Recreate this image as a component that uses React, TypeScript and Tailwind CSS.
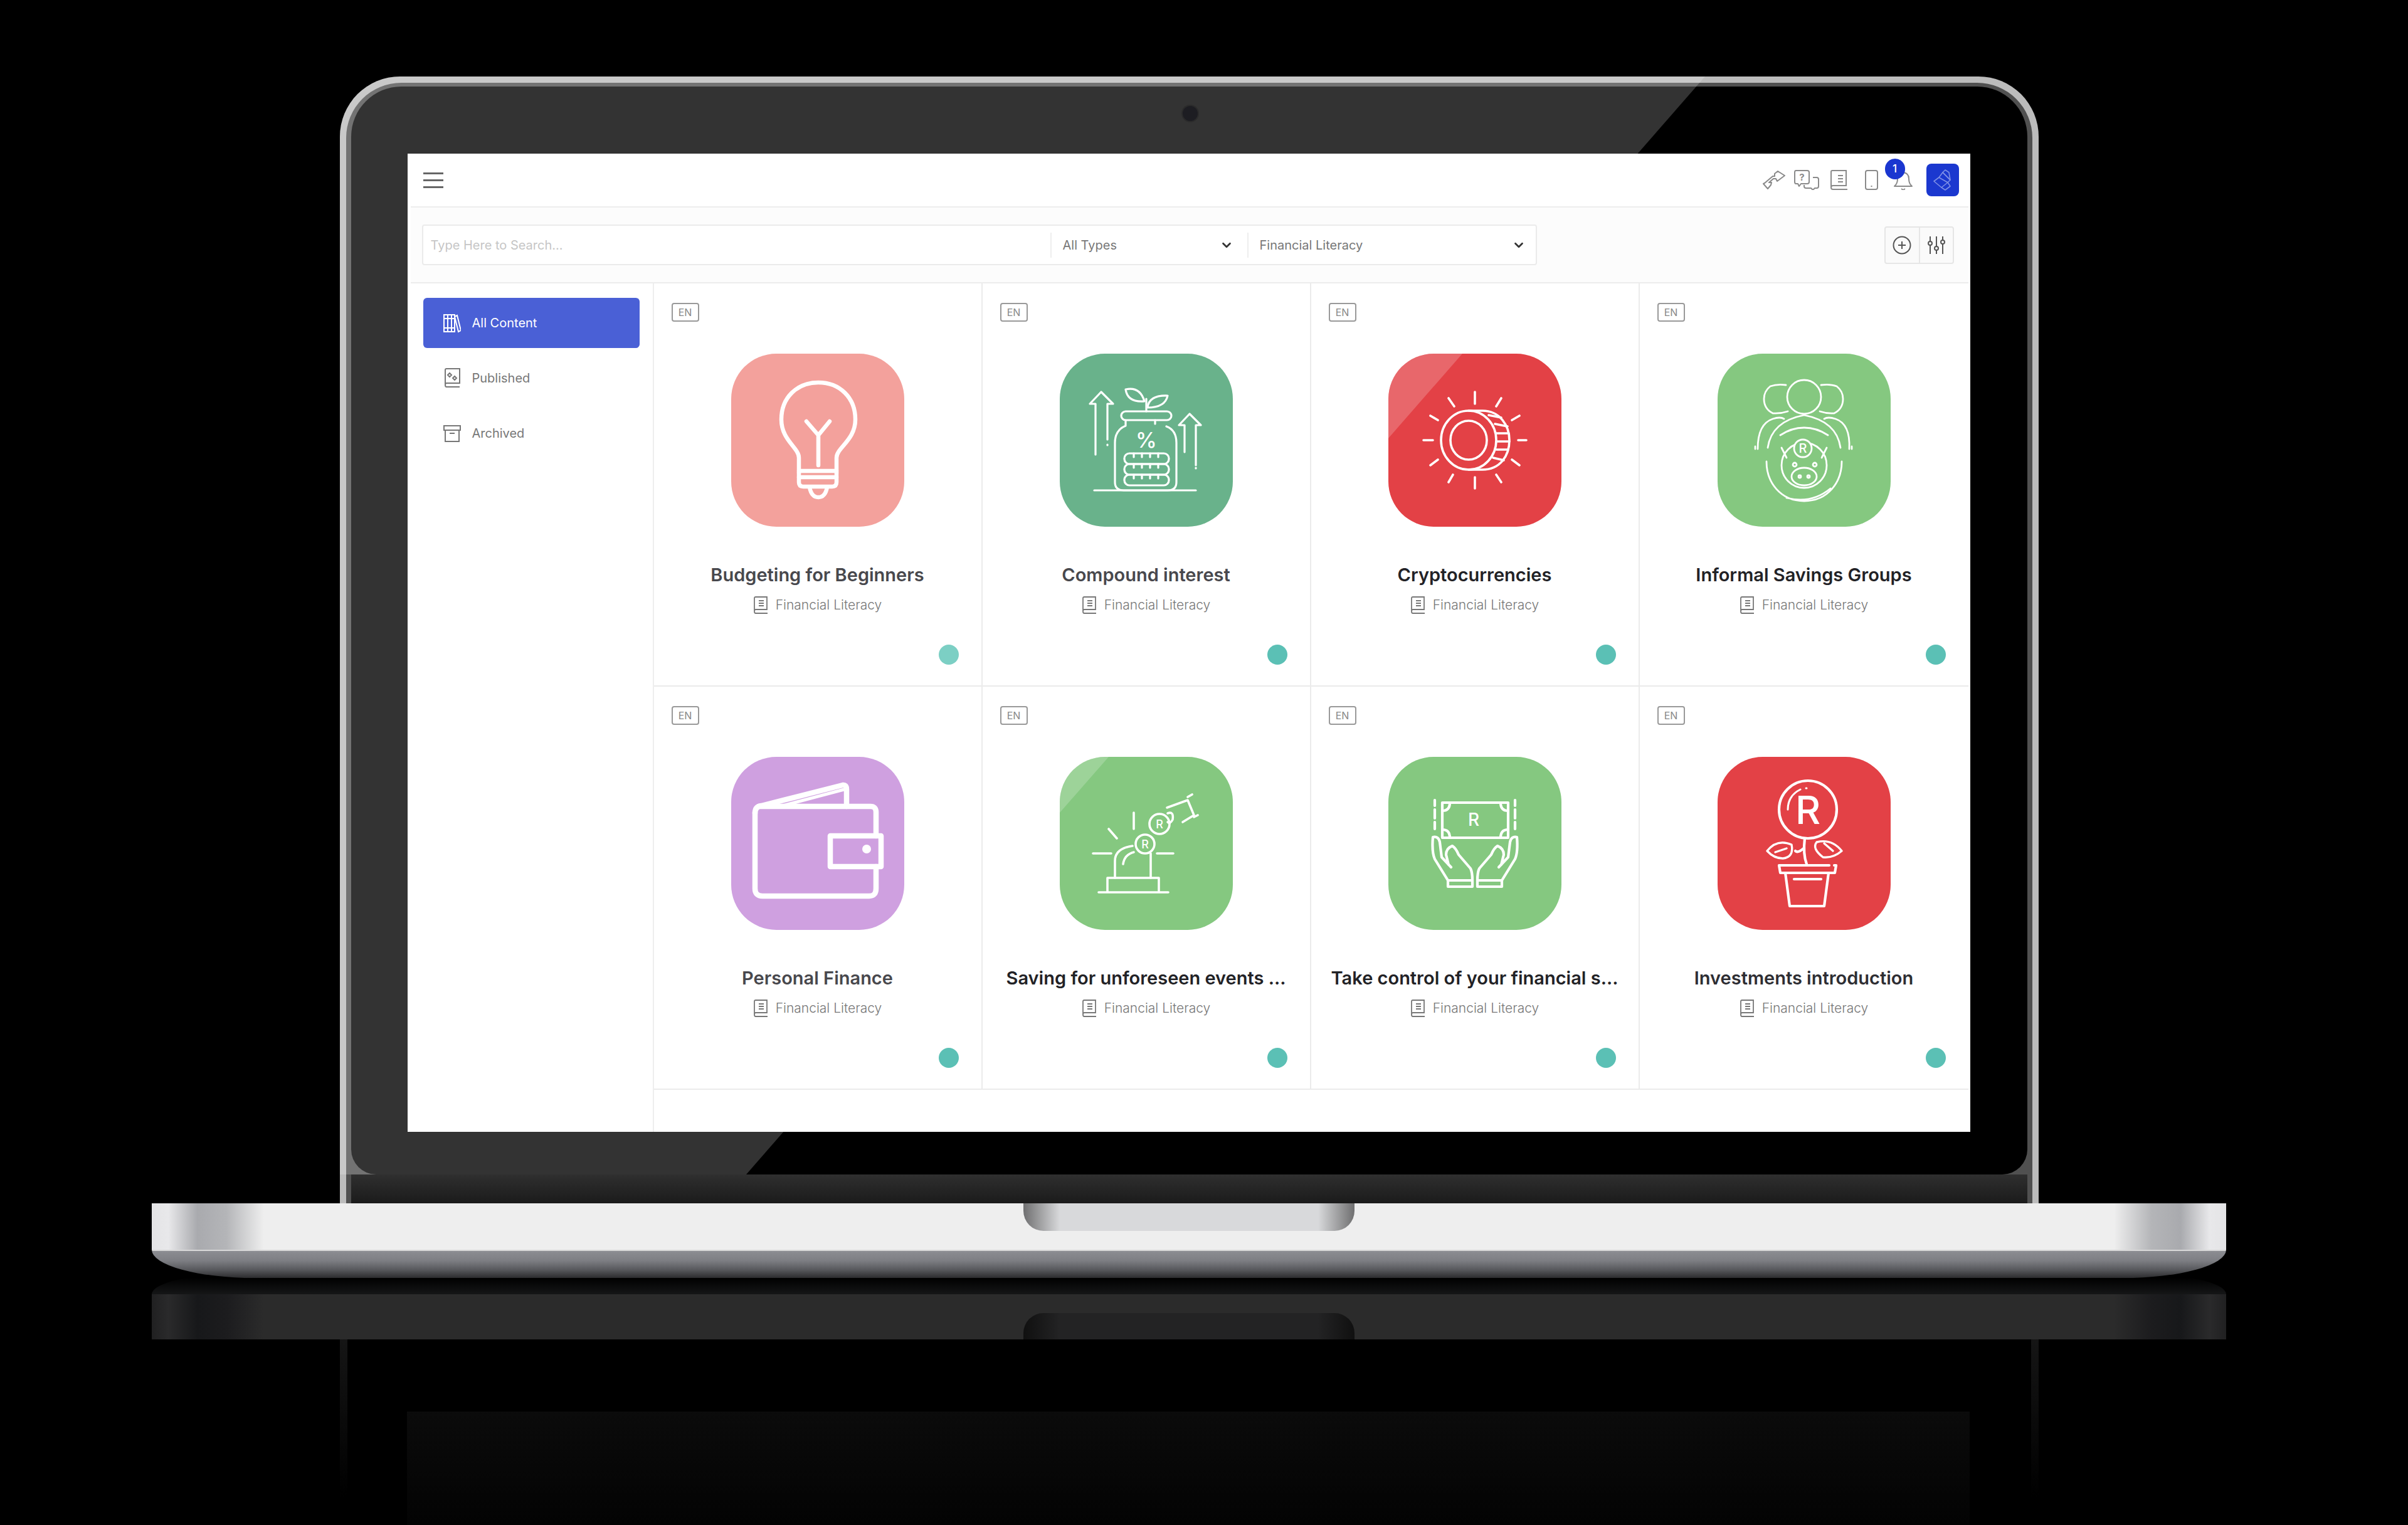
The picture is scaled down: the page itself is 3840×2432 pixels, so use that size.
import type { ReactNode } from "react";
import { ChevronDown } from "lucide-react";

const SANS = "font-['Inter','Liberation_Sans',sans-serif]";

function TileSvg({ width = 4, children }: { width?: number; children: ReactNode }) {
  return (
    <svg
      viewBox="0 0 276 276"
      className="h-full w-full"
      fill="none"
      stroke="#fff"
      strokeWidth={width}
      strokeLinecap="round"
      strokeLinejoin="round"
    >
      {children}
    </svg>
  );
}

const tileText = { fill: "#fff", stroke: "none", fontFamily: "Inter, sans-serif", fontWeight: 500 };

function BulbArt() {
  return (
    <TileSvg width={6.5}>
      <path d="M108 190V166C108 150 80 138 80 105C80 70 105 46 139 46C173 46 198 70 198 105C198 138 168 150 168 166V190" />
      <path d="M108 187H168M108 197H168" />
      <path d="M108 190V205Q108 212 115 212H161Q168 212 168 205V190" />
      <path d="M125 213Q128 229 139 229Q150 229 153 213" />
      <path d="M120 108L139 130L157 108M139 130V178" />
    </TileSvg>
  );
}

function JarArt() {
  return (
    <TileSvg width={3.2}>
      <path d="M57 161V80H48L66 61L85 80H76V137M76 145V146" />
      <path d="M199 157V114H190L207 96L225 114H217V178M217 182V183" />
      <rect x="98" y="92" width="80" height="14" rx="7" />
      <path d="M105 106V115Q88 122 88 142V205Q88 218 102 218H172Q186 218 186 205V142Q186 122 170 116M152 106V112" />
      <path d="M55 218H217" />
      <rect x="103" y="159" width="71" height="17" rx="8" />
      <rect x="103" y="176" width="71" height="17" rx="8" />
      <rect x="103" y="193" width="71" height="17" rx="8" />
      <path d="M118 159V165M131 159V165M144 159V165M157 159V165M118 176V182M131 176V182M144 176V182M157 176V182M118 193V199M131 193V199M144 193V199M157 193V199" />
      <path d="M138 92V72" />
      <path d="M135 76Q108 78 105 57Q128 52 135 76Z" />
      <path d="M140 86Q142 66 172 67Q168 86 140 86Z" />
      <text x="138" y="150" textAnchor="middle" fontSize="34" style={tileText}>%</text>
    </TileSvg>
  );
}

function CoinArt() {
  return (
    <TileSvg width={3.6}>
      <path d="M138 61V80M138 197V215M56 138H71M207 138H220M96 71L105 84M180 71L172 84M67 99L79 106M209 99L197 106M67 178L79 169M209 178L197 169M96 205L103 193M180 205L172 193" />
      <ellipse cx="128" cy="138" rx="44" ry="47" />
      <ellipse cx="128" cy="138" rx="29" ry="31" />
      <path d="M128 91H150C178 91 193 115 193 138C193 163 178 185 150 185H128" />
      <path d="M160 98L180 102M170 112L190 116M172 127L192 127M172 140L193 140M172 153L191 153M167 166L184 170" />
    </TileSvg>
  );
}

function PiggyArt() {
  return (
    <TileSvg width={2.8}>
      <ellipse cx="138" cy="69" rx="27" ry="27" />
      <path d="M109 50Q95 48 84 52Q74 60 74 72Q74 88 88 95Q100 96 112 92" />
      <path d="M165 50Q180 48 190 52Q200 60 200 72Q200 88 186 95Q175 96 163 92" />
      <path d="M64 152Q64 112 88 104Q100 100 106 104M210 152Q212 112 188 104Q176 100 170 104" />
      <path d="M80 150Q86 108 138 98Q190 108 196 150" />
      <path d="M60 152V148M214 152V148" />
      <path d="M78 172C78 205 100 235 138 235C176 235 198 205 198 172M100 130Q118 118 138 118Q158 118 176 130M110 230Q150 240 180 215" />
      <circle cx="138" cy="178" r="36" />
      <ellipse cx="138" cy="196" rx="20" ry="14" />
      <circle cx="123" cy="177" r="3" />
      <circle cx="155" cy="177" r="3" />
      <circle cx="131" cy="196" r="2" />
      <circle cx="145" cy="196" r="2" />
      <path d="M102 150L110 166M174 150L166 166" />
      <circle cx="136" cy="151" r="14" fill="#85c880" />
      <text x="136" y="158" textAnchor="middle" fontSize="20" style={tileText}>R</text>
    </TileSvg>
  );
}

function WalletArt() {
  return (
    <TileSvg width={8.5}>
      <path d="M38 90Q38 79 48 78L178 45Q184 44 184 52V79" />
      <path d="M82 78L180 52" strokeWidth={5} />
      <path d="M38 88V210Q38 222 50 222H220Q231 222 231 210V175M231 126V88Q231 79 222 79H44" />
      <rect x="158" y="126" width="81" height="49" />
      <circle cx="216" cy="147" r="7" fill="#fff" stroke="none" />
    </TileSvg>
  );
}

function AlarmArt() {
  return (
    <TileSvg width={3.6}>
      <path d="M62 216H173M76 216V193H158V216" />
      <path d="M88 193V166Q88 146 116 142M145 193V154" />
      <path d="M101 171Q103 156 118 152" />
      <circle cx="136" cy="139" r="15" />
      <circle cx="159" cy="107" r="16" />
      <text x="136" y="146" textAnchor="middle" fontSize="18" style={tileText}>R</text>
      <text x="159" y="114" textAnchor="middle" fontSize="18" style={tileText}>R</text>
      <path d="M171 81L204 69L214 93L196 104M172 90Q182 86 180 100Q176 108 172 104" />
      <path d="M204 64L211 60M214 96L220 93" />
      <path d="M118 89V115M78 115L91 130M53 154H82M155 154H181" />
    </TileSvg>
  );
}

function HandsArt() {
  return (
    <TileSvg width={4.2}>
      <rect x="86" y="73" width="105" height="56" />
      <path d="M86 86Q98 86 98 73M191 86Q179 86 179 73M86 116Q98 116 98 129M191 116Q179 116 179 129" />
      <path d="M74 69V78M74 84V98M74 104V115M202 69V78M202 84V98M202 104V115" />
      <text x="136" y="110" textAnchor="middle" fontSize="28" style={tileText}>R</text>
      <path d="M95 197L74 163Q69 152 71 128Q80 126 82 136L85 160L100 176M96 172L92 156Q92 146 102 142Q108 146 112 156L131 178Q134 184 134 197" />
      <rect x="95" y="197" width="39" height="10" />
      <path d="M181 197L202 163Q207 152 205 128Q196 126 194 136L191 160L176 176M180 172L184 156Q184 146 174 142Q168 146 164 156L145 178Q142 184 142 197" />
      <rect x="142" y="197" width="39" height="10" />
    </TileSvg>
  );
}

function PlantArt() {
  return (
    <TileSvg width={4.2}>
      <circle cx="144" cy="84" r="46" />
      <path d="M112 84Q112 62 132 52M141 50H142" strokeWidth={3} />
      <text x="144" y="107" textAnchor="middle" fontSize="62" style={tileText}>R</text>
      <path d="M139 130Q136 155 142 171M137 146Q128 154 124 150" />
      <path d="M79 150Q95 130 118 140Q122 160 104 162Q90 162 79 150ZM92 152L110 146" strokeWidth={3.4} />
      <path d="M198 150Q182 130 158 136Q150 146 168 160Q184 162 198 150ZM170 138L184 150" strokeWidth={3.4} />
      <path d="M98 173H178M186 173H189L187 185H100L98 173" />
      <path d="M108 185L115 238H170L177 185M122 195H165" />
    </TileSvg>
  );
}

const cards = [
  { title: "Budgeting for Beginners", tile: "bg-[#f3a19c]", text: "text-[#48484d]", dot: "bg-[#7ccfc4]", art: <BulbArt /> },
  { title: "Compound interest", tile: "bg-[#69b28b]", text: "text-[#48484d]", dot: "bg-[#5bc0b5]", art: <JarArt /> },
  { title: "Cryptocurrencies", tile: "bg-[#e34146]", text: "text-[#222226]", dot: "bg-[#5bc0b5]", art: <CoinArt />, glare: "0,0 118,0 0,135" },
  { title: "Informal Savings Groups", tile: "bg-[#85c880]", text: "text-[#222226]", dot: "bg-[#5bc0b5]", art: <PiggyArt /> },
  { title: "Personal Finance", tile: "bg-[#cfa0e0]", text: "text-[#48484d]", dot: "bg-[#5bc0b5]", art: <WalletArt /> },
  { title: "Saving for unforeseen events ...", tile: "bg-[#85c880]", text: "text-[#222226]", dot: "bg-[#5bc0b5]", art: <AlarmArt />, glare: "0,0 78,0 0,89" },
  { title: "Take control of your financial s...", tile: "bg-[#85c880]", text: "text-[#222226]", dot: "bg-[#5bc0b5]", art: <HandsArt /> },
  { title: "Investments introduction", tile: "bg-[#e34146]", text: "text-[#2e2e33]", dot: "bg-[#5bc0b5]", art: <PlantArt /> },
];

function BookIcon({ className }: { className: string }) {
  return (
    <svg viewBox="0 0 25 28" className={className} fill="none" stroke="currentColor" strokeWidth={1.8}>
      <path d="M2 24V3Q2 1 4 1H22V21H4Q2 21 2 24Q2 27 4 27H23" />
      <path d="M9 7H17M9 11H17M9 15H17" />
    </svg>
  );
}

function TopIcons() {
  return (
    <div className="flex items-center text-[#8a8a8a]">
      {/* swap arrows */}
      <svg viewBox="0 0 37 30" className="h-[30px] w-[37px]" fill="none" stroke="currentColor" strokeWidth={2} strokeLinejoin="round">
        <path d="M3 20L16 9H19V5L24 1L35 8L23 17L21 13H17L10 19H14L13 23L8 29L1 21Z" />
      </svg>
      {/* help chat */}
      <svg viewBox="0 0 40 32" className="ml-[13px] h-[32px] w-[40px]" fill="none" stroke="currentColor" strokeWidth={2} strokeLinejoin="round">
        <path d="M3 1H21Q24 1 24 4V19Q24 22 21 22H11L8 26L6 22H3Q1 22 1 19V4Q1 1 3 1Z" />
        <path d="M30 12H36Q39 12 39 15V26Q39 29 36 29H33L30 32L27 29H19Q16 29 16 26V24" />
        <text x="12.5" y="17" textAnchor="middle" fontSize="15" fontWeight="700" fill="currentColor" stroke="none" fontFamily="Inter, sans-serif">?</text>
      </svg>
      {/* manual */}
      <svg viewBox="0 0 28 32" className="ml-[17px] h-[32px] w-[28px]" fill="none" stroke="currentColor" strokeWidth={2}>
        <path d="M2 27V3Q2 1 4 1H26V25H5Q2 25 2 28Q2 31 5 31H28" />
        <path d="M13 9H21M13 14H21M13 19H21" />
      </svg>
      {/* phone */}
      <svg viewBox="0 0 21 32" className="ml-[28px] h-[32px] w-[21px]" fill="none" stroke="currentColor" strokeWidth={2}>
        <rect x="1" y="1" width="19" height="30" rx="3" />
        <path d="M9.5 26H11.5" />
      </svg>
      {/* bell with badge */}
      <div className="relative ml-[25px] h-[32px] w-[30px]">
        <svg viewBox="0 0 30 32" className="h-[32px] w-[30px]" fill="none" stroke="currentColor" strokeWidth={2} strokeLinejoin="round">
          <path d="M1 26Q6 22 6 14Q6 5 15 4Q24 5 24 14Q24 22 29 26Z" />
          <path d="M12 30L15 32L18 30" />
        </svg>
        <div className={`absolute top-[-18px] left-[-14px] flex h-[33px] w-[32px] items-center justify-center rounded-full bg-[#1a36d0] text-[17px] font-medium text-white ${SANS}`}>
          1
        </div>
      </div>
      {/* logo */}
      <div className="ml-[22px] h-[52px] w-[52px] rounded-[8px] bg-[#1b38cf] p-[8px]">
        <svg viewBox="0 0 36 36" className="h-full w-full" fill="none" stroke="#7f90e6" strokeWidth={1.6} strokeLinejoin="round">
          <path d="M22 2L28 6L30 18L18 6Z" />
          <path d="M18 6L30 18L26 22L12 14Z" />
          <path d="M12 14L4 20L16 30L26 22" />
          <path d="M16 30L22 34L30 28L26 22" />
        </svg>
      </div>
    </div>
  );
}

function SideItem({ label, active, children }: { label: string; active?: boolean; children: ReactNode }) {
  return (
    <div className={`flex h-[80px] w-[345px] items-center gap-[18px] rounded-[6px] pl-[32px] text-[20px] ${SANS} ${active ? "bg-[#4a60d6] text-white" : "text-[#777]"}`}>
      {children}
      <span>{label}</span>
    </div>
  );
}

function AppScreen() {
  return (
    <div className="relative z-10 flex h-[1560px] w-[2492px] flex-col bg-white">
      {/* Top bar */}
      <div className="mr-[3px] ml-[5px] flex h-[86px] shrink-0 items-center justify-between border-b-2 border-[#eee] pr-[15px] pl-[20px]">
        <div className="flex h-[25px] w-[32px] flex-col justify-between">
          <div className="h-[3px] bg-[#666]" />
          <div className="h-[3px] bg-[#666]" />
          <div className="h-[3px] bg-[#666]" />
        </div>
        <TopIcons />
      </div>

      {/* Filter row */}
      <div className="mr-[3px] ml-[5px] flex h-[121px] shrink-0 items-center border-b-2 border-[#ececec] bg-[#fcfcfc] pr-[23px] pl-[18px]">
        <div className={`flex h-[65px] w-[1778px] items-center rounded-[4px] border-2 border-[#ebebeb] bg-white text-[20px] text-[#777] ${SANS}`}>
          <input
            className="h-full w-[1000px] bg-transparent pl-[12px] text-[20px] outline-none placeholder:text-[#c6c6c6]"
            placeholder="Type Here to Search..."
          />
          <div className="flex h-[40px] w-[314px] items-center justify-between border-l-2 border-[#eee] pr-[22px] pl-[18px]">
            <span>All Types</span>
            <ChevronDown className="h-[22px] w-[22px] text-[#333]" strokeWidth={3} />
          </div>
          <div className="flex h-[40px] flex-1 items-center justify-between border-l-2 border-[#eee] pr-[16px] pl-[18px]">
            <span>Financial Literacy</span>
            <ChevronDown className="h-[22px] w-[22px] text-[#333]" strokeWidth={3} />
          </div>
        </div>
        <div className="ml-auto flex h-[60px] w-[111px] rounded-[4px] border-2 border-[#e6e6e6] bg-[#fafafa] text-[#555]">
          <div className="flex w-[55px] items-center justify-center border-r-2 border-[#e6e6e6]">
            <svg viewBox="0 0 30 30" className="h-[30px] w-[30px]" fill="none" stroke="currentColor" strokeWidth={2}>
              <circle cx="15" cy="15" r="13.5" />
              <path d="M15 9V21M9 15H21" />
            </svg>
          </div>
          <div className="flex flex-1 items-center justify-center">
            <svg viewBox="0 0 28 30" className="h-[30px] w-[28px]" fill="none" stroke="currentColor" strokeWidth={2}>
              <path d="M4 1V9M4 15V29M14 1V17M14 23V29M24 1V7M24 13V29" />
              <circle cx="4" cy="12" r="3" />
              <circle cx="14" cy="20" r="3" />
              <circle cx="24" cy="10" r="3" />
            </svg>
          </div>
        </div>
      </div>

      {/* Body */}
      <div className="flex flex-1">
        <div className="flex w-[393px] shrink-0 flex-col gap-[8px] border-r-2 border-[#eee] pt-[23px] pl-[25px]">
          <SideItem label="All Content" active>
            <svg viewBox="0 0 28 32" className="h-[32px] w-[28px]" fill="none" stroke="currentColor" strokeWidth={2}>
              <path d="M1 3H7V30H1ZM7 3H13V30H7ZM13 3H18V30H13ZM1 9H18M1 24H18M18 6L22 4L28 28L24 30Z" />
            </svg>
          </SideItem>
          <SideItem label="Published">
            <svg viewBox="0 0 28 32" className="h-[32px] w-[28px]" fill="none" stroke="currentColor" strokeWidth={2}>
              <path d="M3 26V3Q3 1 5 1H26V24H5Q3 24 3 27Q3 30 5 30H26" />
              <path d="M10 8L13 11L10 14L7 11ZM18 13L21 16L18 19L15 16Z" />
            </svg>
          </SideItem>
          <SideItem label="Archived">
            <svg viewBox="0 0 28 28" className="h-[28px] w-[28px]" fill="none" stroke="currentColor" strokeWidth={2}>
              <path d="M1 2H27V9H1ZM3 9V27H25V9M10 14H18" />
            </svg>
          </SideItem>
        </div>

        <div className="grid auto-rows-[643px] grid-cols-[repeat(4,524px)]">
          {cards.map((c) => (
            <div key={c.title} className="flex flex-col items-center border-r-2 border-b-2 border-[#ebebeb] pt-[31px] nth-[4n]:border-r-0">
              <div className={`ml-[28px] flex h-[30px] w-[44px] items-center justify-center self-start rounded-[4px] border-2 border-[#999] text-[16px] text-[#888] ${SANS}`}>
                EN
              </div>
              <div className={`relative mt-[51px] h-[276px] w-[276px] overflow-hidden rounded-[72px] ${c.tile}`}>
                {c.glare && (
                  <svg viewBox="0 0 276 276" className="absolute inset-0 h-full w-full">
                    <polygon points={c.glare} fill="#fff" fillOpacity={0.2} />
                  </svg>
                )}
                <div className="absolute inset-0">{c.art}</div>
              </div>
              <div className={`mt-[57px] h-[40px] text-[29px] leading-[40px] font-semibold whitespace-nowrap ${c.text} ${SANS}`}>
                {c.title}
              </div>
              <div className={`mt-[14px] flex h-[28px] items-center gap-[11px] text-[21px] font-light text-[#777] ${SANS}`}>
                <BookIcon className="h-[28px] w-[25px] text-[#777]" />
                <span>Financial Literacy</span>
              </div>
              <div className={`mt-auto mr-[36px] mb-[33px] h-[32px] w-[32px] self-end rounded-full ${c.dot}`} />
            </div>
          ))}
        </div>
      </div>
    </div>
  );
}

export default function App() {
  return (
    <div className="h-[2432px] w-[3840px] overflow-hidden bg-black pt-[122px] pl-[242px]">
      <div className="flex h-[2310px] w-[3308px] flex-col items-center">
        {/* Lid */}
        <div className="relative flex h-[1797px] w-[2709px] shrink-0 flex-col overflow-hidden rounded-t-[96px] bg-[#bcbcbc] px-[10px] pt-[10px]">
          <div className="flex flex-1 flex-col rounded-t-[88px] bg-[#505050] px-[8px] pt-[6px]">
            <div className="flex h-[1735px] shrink-0 rounded-t-[80px] rounded-b-[40px] bg-black pt-[107px] pl-[90px]">
              <AppScreen />
            </div>
            <div className="flex-1 bg-[linear-gradient(to_bottom,#2f2f2f,#1b1b1b)]" />
          </div>
          {/* glass glare */}
          <svg viewBox="0 0 2709 1797" className="absolute inset-0 h-full w-full">
            <polygon points="0,0 2177,0 648,1751 0,1751" fill="#fff" fillOpacity={0.2} />
          </svg>
          {/* camera */}
          <div className="absolute top-[47px] left-[1344px] z-10 h-[24px] w-[24px] rounded-full bg-[#1d1d22] ring-2 ring-[#2b2b2b]" />
        </div>

        {/* Base */}
        <div className="flex h-[74px] w-full shrink-0 justify-center bg-[linear-gradient(to_right,#e4e4e6_0%,#e8e8ea_0.8%,#a9aaae_2.2%,#b4b5b8_3.6%,#eeeeee_5.4%,#eeeeee_94.6%,#b4b5b8_96.4%,#a9aaae_97.8%,#e8e8ea_99.2%,#e4e4e6_100%)]">
          <div className="h-[44px] w-[528px] rounded-b-[32px] bg-[linear-gradient(to_right,#6f6f70_0%,#d8d9db_11%,#d8d9db_89%,#6f6f70_100%)]" />
        </div>
        <div className="relative z-10 h-[45px] w-full shrink-0 rounded-br-[164px_45px] rounded-bl-[164px_45px] border-t-2 border-[#d8d8d8] bg-[linear-gradient(to_bottom,#8c8d92_0%,#7e7f84_35%,#57585c_70%,#2c2c2e_100%)]" />

        {/* Reflection */}
        <div className="-mt-[9px] h-[35px] w-full shrink-0 rounded-t-[164px_35px] bg-[linear-gradient(to_bottom,#000000_25%,#151617_100%)]" />
        <div className="flex h-[72px] w-full shrink-0 items-end justify-center bg-[linear-gradient(to_right,#202021_0%,#2a2a2b_0.8%,#17181a_2.2%,#1c1c1e_3.6%,#2b2b2b_5.4%,#2b2b2b_94.6%,#1c1c1e_96.4%,#17181a_97.8%,#2a2a2b_99.2%,#202021_100%)]">
          <div className="h-[42px] w-[528px] rounded-t-[32px] bg-[linear-gradient(to_right,#101010_0%,#232324_11%,#232324_89%,#101010_100%)]" />
        </div>
        <div className="flex w-[2709px] flex-1 bg-[linear-gradient(to_bottom,#151515_0%,#000000_85%)] px-[12px]">
          <div className="flex flex-1 bg-black pt-[115px] pl-[95px]">
            <div className="h-[181px] w-[2492px] bg-[linear-gradient(to_bottom,#0b0b0b,#030303)]" />
          </div>
        </div>
      </div>
    </div>
  );
}
